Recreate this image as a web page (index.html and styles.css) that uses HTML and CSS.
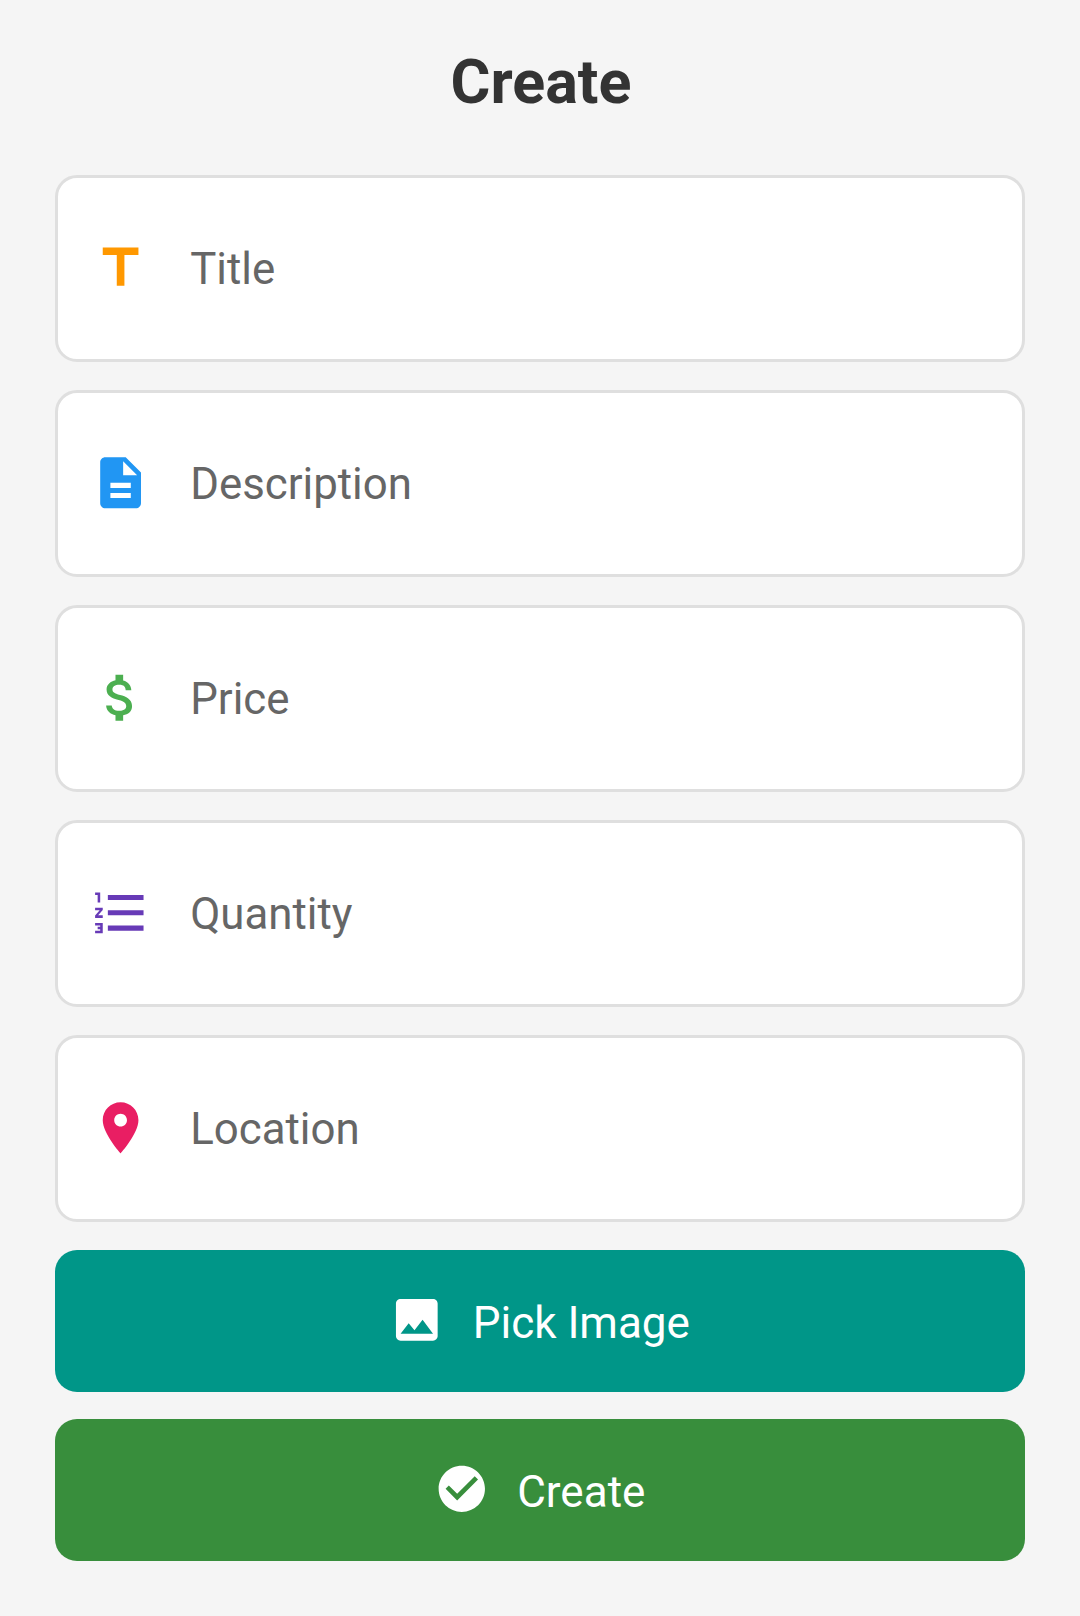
FILE: index.html
```html
<!DOCTYPE html>
<html lang="en">
<head>
<meta charset="utf-8">
<title>Create</title>
<link rel="stylesheet" href="styles.css">
</head>
<body>
<main class="screen">
  <h1 class="heading">Create</h1>
  <form class="form">
    <label class="field">
      <svg class="icon orange" viewBox="0 0 24 24"><path d="M5 4v3h5.5v12h3V7H19V4z"/></svg>
      <span class="label">Title</span>
    </label>
    <label class="field">
      <svg class="icon blue" viewBox="0 0 24 24"><path d="M14 2H6c-1.1 0-2 .9-2 2v16c0 1.1.9 2 2 2h12c1.1 0 2-.9 2-2V8l-6-6zm2 16H8v-2h8v2zm0-4H8v-2h8v2zm-3-5V3.500L18.500 9H13z"/></svg>
      <span class="label">Description</span>
    </label>
    <label class="field">
      <svg class="icon green" viewBox="0 0 24 24"><path d="M11.800 10.900c-2.270-.59-3-1.200-3-2.150 0-1.090 1.010-1.850 2.700-1.850 1.780 0 2.440.85 2.500 2.100h2.210c-.07-1.720-1.120-3.300-3.210-3.810V3h-3v2.160c-1.940.42-3.500 1.680-3.500 3.610 0 2.310 1.910 3.460 4.700 4.130 2.500.6 3 1.480 3 2.410 0 .69-.49 1.790-2.700 1.790-2.060 0-2.870-.92-2.980-2.100h-2.200c.12 2.190 1.760 3.420 3.680 3.830V21h3v-2.150c1.950-.37 3.500-1.500 3.500-3.550 0-2.840-2.430-3.810-4.700-4.400z"/></svg>
      <span class="label">Price</span>
    </label>
    <label class="field">
      <svg class="icon purple" viewBox="0 0 24 24"><path d="M2 17h2v.5H3v1h1v.5H2v1h3v-4H2v1zm1-9h1V4H2v1h1v3zm-1 3h1.800L2 13.100v.9h3v-1H3.200L5 10.900V10H2v1zm5-6v2h14V5H7zm0 14h14v-2H7v2zm0-6h14v-2H7v2z"/></svg>
      <span class="label">Quantity</span>
    </label>
    <label class="field">
      <svg class="icon pink" viewBox="0 0 24 24"><path d="M12 2C8.130 2 5 5.130 5 9c0 5.250 7 13 7 13s7-7.750 7-13c0-3.870-3.130-7-7-7zm0 9.500c-1.380 0-2.500-1.120-2.500-2.500s1.120-2.500 2.500-2.500 2.500 1.120 2.500 2.500-1.120 2.500-2.500 2.500z"/></svg>
      <span class="label">Location</span>
    </label>
    <button class="button pick" type="button">
      <svg class="button-icon" viewBox="0 0 24 24"><path d="M21 19V5c0-1.100-.9-2-2-2H5c-1.100 0-2 .9-2 2v14c0 1.100.9 2 2 2h14c1.100 0 2-.9 2-2zM8.500 13.500l2.500 3.010L14.500 12l4.500 6H5l3.500-4.500z"/></svg>
      <span class="button-text">Pick Image</span>
    </button>
    <button class="button submit" type="button">
      <svg class="button-icon" viewBox="0 0 24 24"><path d="M12 2C6.480 2 2 6.480 2 12s4.480 10 10 10 10-4.480 10-10S17.520 2 12 2zm-2 15l-5-5 1.410-1.410L10 14.170l7.590-7.590L19 8l-9 9z"/></svg>
      <span class="button-text">Create</span>
    </button>
  </form>
</main>
</body>
</html>
```
FILE: styles.css
```css
* {
  box-sizing: border-box;
}

body {
  margin: 0;
  background: #f5f5f5;
  font-family: Roboto, sans-serif;
}

.screen {
  min-height: 1616px;
  padding: 47px 55px 55px;
}

.heading {
  margin: 0 0 58px;
  padding-left: 2px;
  font-size: 61px;
  line-height: 70px;
  font-weight: 700;
  text-align: center;
  color: #333;
}

.form {
  display: flex;
  flex-direction: column;
  gap: 28px;
}

.field {
  display: flex;
  align-items: center;
  gap: 39px;
  height: 187px;
  padding: 0 32px;
  background: #fff;
  border: 3px solid #dfdfdf;
  border-radius: 22px;
}

.icon {
  width: 61.200px;
  height: 61.600px;
  margin-top: -1.500px;
  fill: currentColor;
}

.orange { color: #ff9800; }
.blue { color: #2196f3; }
.green { color: #4caf50; }
.purple { color: #673ab7; }
.pink { color: #e91e63; }

.label {
  padding-top: 1px;
  font-size: 43.800px;
  line-height: 52px;
  color: #666;
}

.button {
  display: flex;
  align-items: center;
  justify-content: center;
  gap: 28px;
  height: 142px;
  padding: 0 1px 0 0;
  border: 0;
  border-radius: 22px;
  font: 44px/52px Roboto, sans-serif;
  color: #fff;
}

.button + .button {
  margin-top: -1px;
}

.button-icon {
  width: 55.600px;
  height: 55.600px;
  margin-top: -1.500px;
  fill: currentColor;
}

.button-text {
  padding-top: 4px;
}

.pick { background: #009688; }
.submit { background: #388e3c; }
```
